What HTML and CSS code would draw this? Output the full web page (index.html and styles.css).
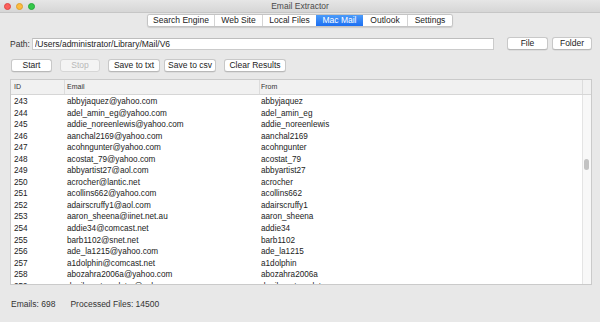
FILE: index.html
```html
<!DOCTYPE html>
<html lang="en">
<head>
    <meta charset="UTF-8">
    <meta name="viewport" content="width=device-width, initial-scale=1.0">
    <title>Email Extractor</title>
    <link rel="stylesheet" href="styles.css">
</head>
<body>
    <div class="window">
        <div class="titlebar">
            <div class="lights">
                <span class="light light-red"></span>
                <span class="light light-yellow"></span>
                <span class="light light-green"></span>
            </div>
            <div class="title">Email Extractor</div>
            <div></div>
        </div>

        <div class="tabs">
            <button class="tab">Search Engine</button>
            <button class="tab">Web Site</button>
            <button class="tab">Local Files</button>
            <button class="tab tab-active">Mac Mail</button>
            <button class="tab">Outlook</button>
            <button class="tab">Settings</button>
        </div>

        <div class="path-row">
            <label class="path-label" for="pathInput">Path:</label>
            <input class="path-input" id="pathInput" type="text" value="/Users/administrator/Library/Mail/V6">
            <button class="btn btn-file">File</button>
            <button class="btn btn-folder">Folder</button>
        </div>

        <div class="actions">
            <button class="btn btn-start">Start</button>
            <button class="btn btn-stop" disabled>Stop</button>
            <button class="btn btn-txt">Save to txt</button>
            <button class="btn btn-csv">Save to csv</button>
            <button class="btn btn-clear">Clear Results</button>
        </div>

        <div class="table">
            <div class="table-head">
                <div class="col col-id">ID</div>
                <div class="col col-email">Email</div>
                <div class="col col-from">From</div>
                <div class="col col-bar"></div>
            </div>
            <div class="table-body">
                <div class="rows" id="rows"></div>
                <div class="scrollbar"><div class="thumb"></div></div>
            </div>
        </div>

        <div class="status">
            <span>Emails: 698</span>
            <span>Processed Files: 14500</span>
        </div>
    </div>
    <script>
        const emails = [
            ['243', 'abbyjaquez@yahoo.com', 'abbyjaquez'],
            ['244', 'adel_amin_eg@yahoo.com', 'adel_amin_eg'],
            ['245', 'addie_noreenlewis@yahoo.com', 'addie_noreenlewis'],
            ['246', 'aanchal2169@yahoo.com', 'aanchal2169'],
            ['247', 'acohngunter@yahoo.com', 'acohngunter'],
            ['248', 'acostat_79@yahoo.com', 'acostat_79'],
            ['249', 'abbyartist27@aol.com', 'abbyartist27'],
            ['250', 'acrocher@lantic.net', 'acrocher'],
            ['251', 'acollins662@yahoo.com', 'acollins662'],
            ['252', 'adairscruffy1@aol.com', 'adairscruffy1'],
            ['253', 'aaron_sheena@iinet.net.au', 'aaron_sheena'],
            ['254', 'addie34@comcast.net', 'addie34'],
            ['255', 'barb1102@snet.net', 'barb1102'],
            ['256', 'ade_la1215@yahoo.com', 'ade_la1215'],
            ['257', 'a1dolphin@comcast.net', 'a1dolphin'],
            ['258', 'abozahra2006a@yahoo.com', 'abozahra2006a'],
            ['259', 'danilova-translator@yahoo.com', 'danilova-translator']
        ];

        const rows = document.getElementById('rows');
        emails.forEach(item => {
            const row = document.createElement('div');
            row.className = 'row';
            item.forEach((text, i) => {
                const cell = document.createElement('div');
                cell.className = 'cell ' + ['col-id', 'col-email', 'col-from'][i];
                cell.textContent = text;
                row.appendChild(cell);
            });
            rows.appendChild(row);
        });
    </script>
</body>
</html>
```

FILE: styles.css
```css
:root {
    --window: #e8e8e8;
    --titlebar-top: #e6e6e6;
    --titlebar-bottom: #d6d6d6;
    --font: #222;
    --border: #c4c4c4;
    --btn: #fff;
    --blue-top: #4b9bf9;
    --blue-bottom: #1c6ff2;
}

*,
*::before,
*::after {
    box-sizing: border-box;
    padding: 0;
    margin: 0;
}

body {
    width: 600px;
    height: 322px;
    overflow: hidden;
    background-color: var(--window);
    color: var(--font);
    font-family: 'Liberation Sans', Arial, sans-serif;
    font-size: 8.5px;
}

button,
input {
    color: inherit;
    font-family: inherit;
    font-size: inherit;
    outline: none;
}

.window {
    display: flex;
    flex-direction: column;
    height: 322px;
}

/* title bar */

.titlebar {
    display: grid;
    grid-template-columns: 1fr auto 1fr;
    align-items: center;
    height: 13px;
    background: linear-gradient(var(--titlebar-top), var(--titlebar-bottom));
    border-bottom: 1px solid #c6c6c6;
}

.lights {
    display: flex;
    gap: 5px;
    padding-left: 4px;
}

.light {
    width: 7px;
    height: 7px;
    border-radius: 50%;
}

.light-red {
    background-color: #fc605c;
    border: 0.5px solid #de4643;
}

.light-yellow {
    background-color: #fdbc40;
    border: 0.5px solid #dd9f2d;
}

.light-green {
    background-color: #34c84a;
    border: 0.5px solid #27a83a;
}

.title {
    color: #4a4a4a;
    font-size: 8.5px;
}

/* tabs */

.tabs {
    display: flex;
    align-self: center;
    margin-top: 1px;
    height: 13px;
    border: 1px solid var(--border);
    border-radius: 3px;
    background-color: var(--btn);
    box-shadow: 0 0.5px 1px rgba(0, 0, 0, 0.12);
    overflow: hidden;
}

.tab {
    border: none;
    border-left: 1px solid #d4d4d4;
    background: var(--btn);
    font-size: 8.5px;
    line-height: 11px;
    padding: 0;
    text-align: center;
    white-space: nowrap;
}

.tab:first-child {
    border-left: none;
    width: 66px;
}

.tab:nth-child(2) {
    width: 48px;
}

.tab:nth-child(3) {
    width: 54px;
}

.tab:nth-child(4) {
    width: 47px;
}

.tab:nth-child(5) {
    width: 44px;
}

.tab:nth-child(6) {
    width: 45px;
}

.tab-active {
    background: linear-gradient(var(--blue-top), var(--blue-bottom));
    color: #fff;
    border-left: none;
}

.tab-active + .tab {
    border-left: none;
}

/* path row */

.path-row {
    display: flex;
    align-items: center;
    margin-top: 10px;
    padding: 0 8px 0 10px;
    height: 13px;
}

.path-label {
    width: 22px;
    color: #333;
}

.path-input {
    width: 462px;
    height: 12px;
    border: 1px solid #cbcbcb;
    border-top-color: #bdbdbd;
    background-color: #fff;
    padding: 0 2px;
    font-size: 8.5px;
}

.btn {
    height: 13px;
    border: 1px solid #c8c8c8;
    border-bottom-color: #b8b8b8;
    border-radius: 3px;
    background-color: var(--btn);
    box-shadow: 0 0.5px 0.5px rgba(0, 0, 0, 0.1);
    font-size: 8.5px;
    line-height: 11px;
    white-space: nowrap;
}

.btn-file {
    width: 41px;
    margin-left: 13px;
}

.btn-folder {
    width: 40px;
    margin-left: 4px;
}

/* action buttons */

.actions {
    display: flex;
    gap: 8px;
    margin-top: 9px;
    padding-left: 11px;
}

.btn-start {
    width: 41px;
}

.btn-stop {
    width: 40px;
    color: #b8b8b8;
    background-color: #f4f4f4;
    border-color: #d6d6d6;
    box-shadow: none;
}

.btn-txt {
    width: 52px;
}

.btn-csv {
    width: 52px;
    margin-left: -4px;
}

.btn-clear {
    width: 62px;
}

/* table */

.table {
    display: flex;
    flex-direction: column;
    margin: 7px 8px 0 10px;
    height: 206px;
    border: 1px solid #cacaca;
    background-color: #fff;
}

.table-head {
    display: flex;
    height: 15px;
    flex-shrink: 0;
    background-color: #f1f1f1;
    border-bottom: 1px solid #d6d6d6;
    font-size: 7px;
    line-height: 14px;
    color: #333;
}

.table-head .col {
    border-left: 1px solid #dcdcdc;
}

.table-head .col:first-child {
    border-left: none;
}

.col-id {
    width: 53px;
    padding-left: 3px;
}

.col-email {
    width: 195px;
    padding-left: 2px;
}

.col-from {
    flex: 1;
    padding-left: 1px;
}

.col-bar {
    width: 9px;
}

.table-body {
    display: flex;
    flex: 1;
    overflow: hidden;
}

.rows {
    flex: 1;
    padding-top: 1px;
}

.row {
    display: flex;
    height: 11.55px;
    line-height: 11.55px;
    font-size: 8.2px;
    white-space: nowrap;
}

.row .col-email {
    padding-left: 3px;
}

.row .col-from {
    padding-left: 2px;
}

.scrollbar {
    display: flex;
    flex-direction: column;
    flex-shrink: 0;
    width: 9px;
    background-color: #f8f8f8;
    border-left: 1px solid #e4e4e4;
    padding: 64px 1px 0 1px;
}

.thumb {
    width: 5px;
    height: 11px;
    border-radius: 3px;
    background-color: #c2c2c2;
}

/* status */

.status {
    display: flex;
    gap: 15px;
    margin-top: 14px;
    padding-left: 11px;
    color: #333;
    font-size: 8.5px;
}
```
